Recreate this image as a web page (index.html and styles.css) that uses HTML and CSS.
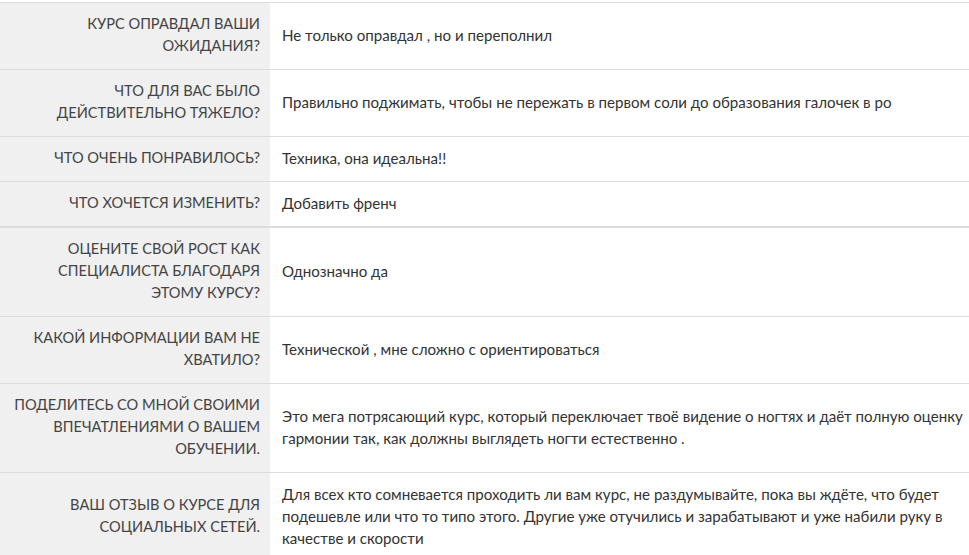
FILE: index.html
```html
<!DOCTYPE html>
<html lang="ru">
<head>
  <meta charset="UTF-8" />
  <meta name="viewport" content="width=device-width, initial-scale=1" />
  <title>Отзыв о курсе</title>
  <link rel="stylesheet" href="styles.css">
</head>
<body>
  <!-- REVIEW ANSWERS -->
  <table class="review">
    <tbody>
      <tr>
        <th>Курс оправдал ваши ожидания?</th>
        <td>Не только оправдал , но и переполнил</td>
      </tr>
      <tr>
        <th>Что для вас было действительно тяжело?</th>
        <td>Правильно поджимать, чтобы не пережать в первом соли до образования галочек в ро</td>
      </tr>
      <tr>
        <th>Что очень понравилось?</th>
        <td>Техника, она идеальна!!</td>
      </tr>
      <tr>
        <th>Что хочется изменить?</th>
        <td>Добавить френч</td>
      </tr>
    </tbody>
    <tbody class="group">
      <tr>
        <th>Оцените свой рост как специалиста благодаря этому курсу?</th>
        <td>Однозначно да</td>
      </tr>
      <tr>
        <th>Какой информации вам не хватило?</th>
        <td>Технической , мне сложно с ориентироваться</td>
      </tr>
      <tr>
        <th>Поделитесь со мной своими впечатлениями о вашем обучении.</th>
        <td>Это мега потрясающий курс, который переключает твоё видение о ногтях и даёт полную оценку гармонии так, как должны выглядеть ногти естественно .</td>
      </tr>
      <tr>
        <th>Ваш отзыв о курсе для социальных сетей.</th>
        <td>Для всех кто сомневается проходить ли вам курс, не раздумывайте, пока вы ждёте, что будет подешевле или что то типо этого. Другие уже отучились и зарабатывают и уже набили руку в качестве и скорости</td>
      </tr>
    </tbody>
  </table>
</body>
</html>
```

FILE: styles.css
```css
body {
  margin: 0;
  padding-top: 2px;
  background: #fff;
  font-family: Lato, "Liberation Sans", sans-serif;
  color: #333;
}

.review {
  width: 100%;
  border-collapse: collapse;
  font-size: 15.1px;
  line-height: 22px;
}

.review th,
.review td {
  border-top: 1px solid #dcdcdc;
  padding: 10px 0 12px 12px;
  vertical-align: middle;
}

.review th {
  width: 248px;
  padding-right: 10px;
  background: #f0f0f0;
  text-align: right;
  text-transform: uppercase;
  font-size: 14.6px;
  font-weight: normal;
  color: #444;
}

.review td {
  text-align: left;
}

.review .group tr:first-child th,
.review .group tr:first-child td {
  border-top: 2px solid #dcdcdc;
}
```
